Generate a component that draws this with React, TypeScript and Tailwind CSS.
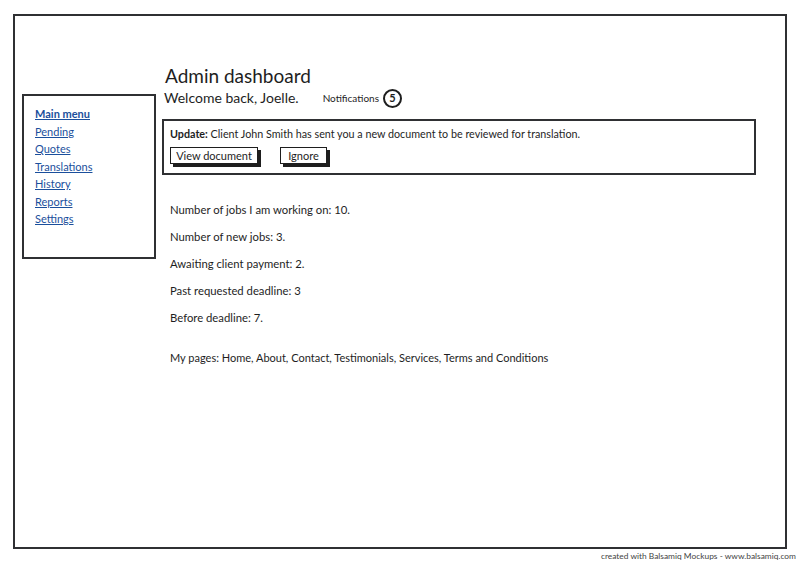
import React from 'react'

const menu = ['Pending', 'Quotes', 'Translations', 'History', 'Reports', 'Settings']

const stats = [
    'Number of jobs I am working on: 10.',
    'Number of new jobs: 3.',
    'Awaiting client payment: 2.',
    'Past requested deadline: 3',
    'Before deadline: 7.',
]

export default function App() {
    return (
        <div className="w-[800px] h-[564px] bg-white text-[#1e1e1e] font-['Lato','Liberation_Sans',sans-serif] overflow-hidden">
            <div className="ml-[13px] mt-[14px] w-[774px] h-[535px] border-2 border-[#2f3033] flex flex-row">

                {/* side menu */}
                <div className="ml-[7px] mt-[78px] w-[134px] h-[165px] border-2 border-[#2f3033] pl-[11px] pt-[9px] flex flex-col">
                    <a className="text-[11px] leading-[17.5px] font-bold text-[#1b4f9c] underline">Main menu</a>
                    {menu.map((item) => {
                        return (
                            <a key={item} className="text-[11px] leading-[17.5px] text-[#1b4f9c] underline">{item}</a>
                        )
                    })}
                </div>

                {/* main */}
                <div className="ml-[6px] mt-[48px] flex flex-col">
                    <h1 className="pl-[3px] text-[19px] leading-[23px]">Admin dashboard</h1>
                    <div className="flex flex-row items-center h-[20px] mt-[1px] pl-[2px]">
                        <span className="text-[14px] leading-[18px]">Welcome back, Joelle.</span>
                        <span className="ml-[24px] text-[10px]">Notifications</span>
                        <span className="ml-[4px] w-[19px] h-[19px] rounded-full border-2 border-[#1e1e1e] flex items-center justify-center text-[11px] font-bold">5</span>
                    </div>

                    <div className="mt-[11px] w-[594px] h-[56px] border-2 border-[#2f3033] pl-[6px] pt-[6px]">
                        <p className="text-[10.75px] leading-[14px]">
                            <span className="font-bold">Update:</span> Client John Smith has sent you a new document to be reviewed for translation.
                        </p>
                        <div className="flex flex-row gap-[22px] mt-[6px]">
                            <button className="w-[88px] h-[17px] border border-[#1e1e1e] shadow-[3px_3px_0_#1e1e1e] text-[11px] leading-[15px] text-center">View document</button>
                            <button className="w-[47px] h-[17px] border border-[#1e1e1e] shadow-[3px_3px_0_#1e1e1e] text-[11px] leading-[15px] text-center">Ignore</button>
                        </div>
                    </div>

                    <div className="mt-[27px] pl-[8px] flex flex-col gap-[11px]">
                        {stats.map((s) => {
                            return (
                                <p key={s} className="text-[11.3px] leading-[16px]">{s}</p>
                            )
                        })}
                        <p className="mt-[13px] text-[11px] leading-[16px]">My pages: Home, About, Contact, Testimonials, Services, Terms and Conditions</p>
                    </div>
                </div>
            </div>

            <div className="w-[796px] text-right text-[8.4px] leading-[14px] text-[#444]">
                created with Balsamiq Mockups - www.balsamiq.com
            </div>
        </div>
    )
}
